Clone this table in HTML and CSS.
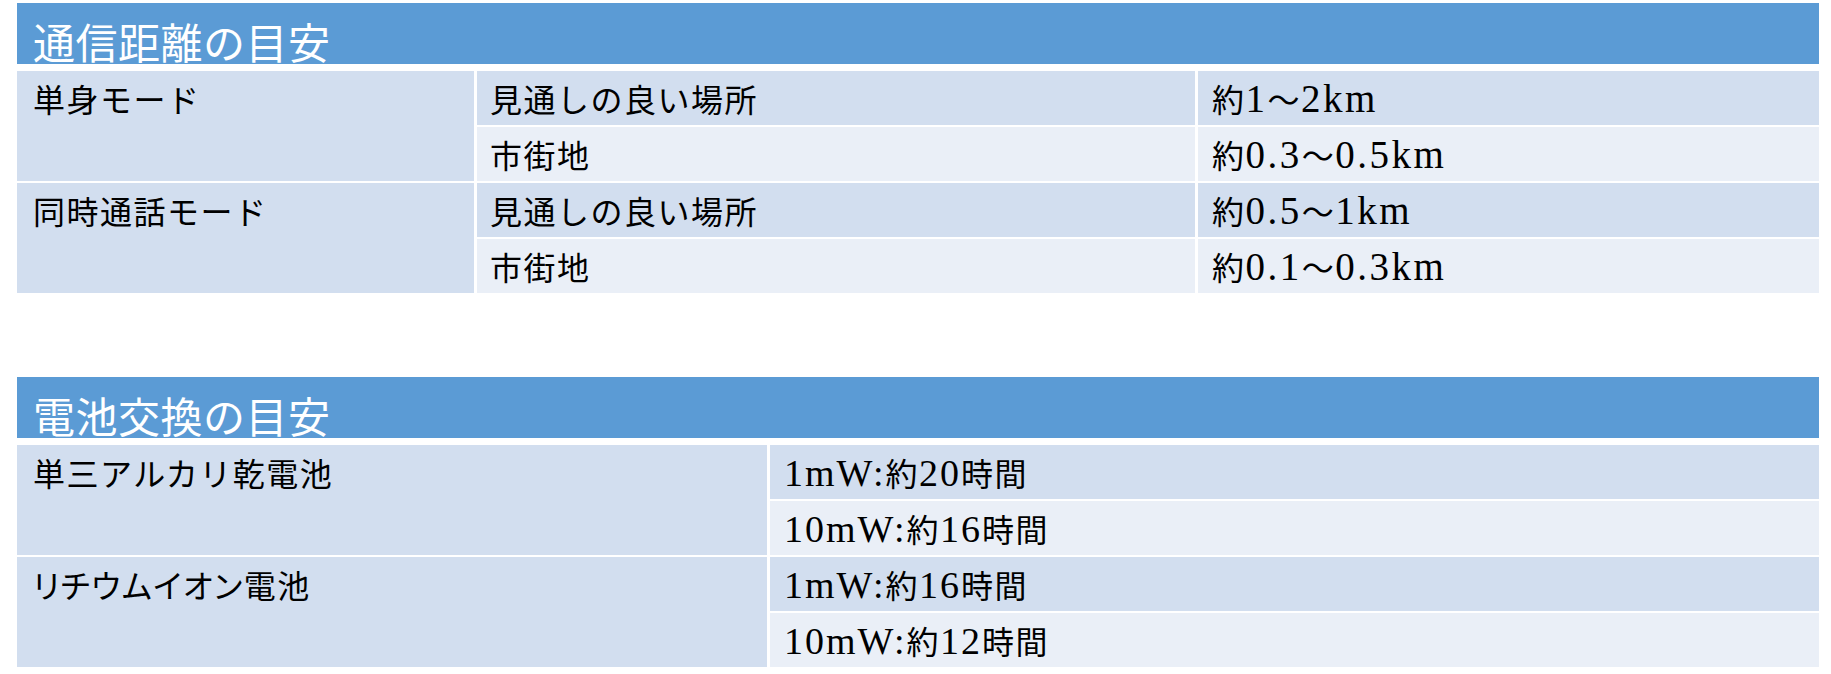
FILE: index.html
```html
<!DOCTYPE html>
<html lang="ja">
<head>
<meta charset="utf-8">
<link rel="stylesheet" href="styles.css">
</head>
<body>
<section class="block first">
  <div class="head">通信距離の目安</div>
  <div class="grid g1">
    <div class="cell dark span2">単身モード</div>
    <div class="cell dark">見通しの良い場所</div>
    <div class="cell dark val">約<span class="num">1</span>～<span class="num">2km</span></div>
    <div class="cell light">市街地</div>
    <div class="cell light val">約<span class="num">0.3</span>～<span class="num">0.5km</span></div>
    <div class="cell dark span2">同時通話モード</div>
    <div class="cell dark">見通しの良い場所</div>
    <div class="cell dark val">約<span class="num">0.5</span>～<span class="num">1km</span></div>
    <div class="cell light">市街地</div>
    <div class="cell light val">約<span class="num">0.1</span>～<span class="num">0.3km</span></div>
  </div>
</section>
<section class="block second">
  <div class="head">電池交換の目安</div>
  <div class="grid g2">
    <div class="cell dark span2">単三アルカリ乾電池</div>
    <div class="cell dark val2"><span class="num">1mW:</span>約<span class="num">20</span>時間</div>
    <div class="cell light val2"><span class="num">10mW:</span>約<span class="num">16</span>時間</div>
    <div class="cell dark span2 tight">リチウムイオン電池</div>
    <div class="cell dark val2"><span class="num">1mW:</span>約<span class="num">16</span>時間</div>
    <div class="cell light val2"><span class="num">10mW:</span>約<span class="num">12</span>時間</div>
  </div>
</section>
</body>
</html>
```
FILE: styles.css
```css
html, body {
  margin: 0;
  padding: 0;
  background: #ffffff;
}
body {
  padding: 3px 0 0 17px;
  width: 1802px;
  font-family: "Noto Sans CJK JP", "Liberation Serif", sans-serif;
  color: #000000;
}
.block.second {
  margin-top: 84px;
}
.head {
  height: 61px;
  background: #5b9bd5;
  color: #ffffff;
  font-size: 42px;
  line-height: 1;
  display: flex;
  align-items: flex-end;
  padding: 0 0 2px 16px;
  box-sizing: border-box;
  margin-bottom: 7px;
  letter-spacing: 0.5px;
}
.grid {
  display: grid;
  grid-auto-rows: 54px;
  row-gap: 2px;
  column-gap: 3px;
}
.g1 {
  grid-template-columns: 457px 718px 1fr;
}
.g2 {
  grid-template-columns: 750px 1fr;
}
.cell {
  font-size: 32px;
  line-height: 54px;
  padding-left: 13px;
  letter-spacing: 1.5px;
  white-space: nowrap;
}
.span2 {
  grid-row: span 2;
  padding-left: 16px;
}
.tight {
  letter-spacing: 1.5px;
  font-feature-settings: "palt";
}
.dark {
  background: #d2deef;
}
.light {
  background: #eaeff7;
}
.num {
  font-family: "Liberation Serif", serif;
  font-size: 37px;
  letter-spacing: 2px;
}
.val .num {
  font-size: 39px;
  letter-spacing: 2.5px;
}
.val2 .num {
  font-size: 38px;
}
.val, .val2 {
  padding-left: 14px;
}
```
